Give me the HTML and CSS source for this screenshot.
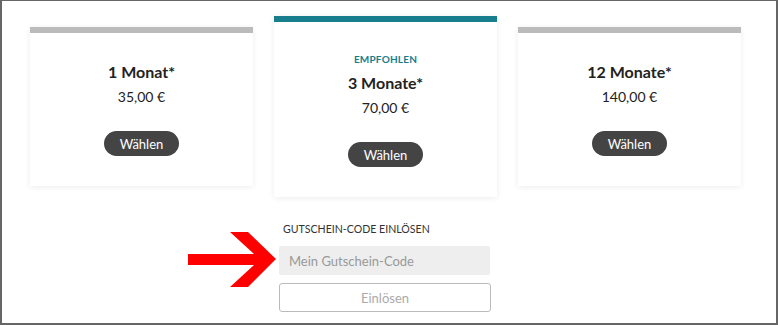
FILE: index.html
```html
<!DOCTYPE html>
<html lang="de">
<head>
    <meta charset="UTF-8">
    <meta name="viewport" content="width=device-width, initial-scale=1.0">
    <title>Abo wählen</title>
    <link rel="stylesheet" href="styles.css">
</head>
<body>
    <div class="frame">
        <div class="plans">
            <div class="plan">
                <h2 class="plan-title">1 Monat*</h2>
                <div class="plan-price">35,00 €</div>
                <button class="choose-button">Wählen</button>
            </div>
            <div class="plan plan-featured">
                <div class="plan-badge">EMPFOHLEN</div>
                <h2 class="plan-title">3 Monate*</h2>
                <div class="plan-price">70,00 €</div>
                <button class="choose-button">Wählen</button>
            </div>
            <div class="plan">
                <h2 class="plan-title">12 Monate*</h2>
                <div class="plan-price">140,00 €</div>
                <button class="choose-button">Wählen</button>
            </div>
        </div>

        <div class="voucher">
            <div class="voucher-label">GUTSCHEIN-CODE EINLÖSEN</div>
            <input type="text" class="voucher-input" placeholder="Mein Gutschein-Code">
            <button class="voucher-button">Einlösen</button>
        </div>

        <svg class="arrow" width="90" height="58" viewBox="188 231 90 58">
            <polygon fill="#f00" points="188,254 254,254 230,232 248,232 276,259 248,287 230,287 254,265 188,265"/>
        </svg>
    </div>
</body>
</html>
```

FILE: styles.css
```css
body {
    margin: 0;
    font-family: Lato, "Open Sans", sans-serif;
    color: #222;
    background-color: #fff;
}
.frame {
    position: relative;
    box-sizing: border-box;
    width: 778px;
    height: 325px;
    border-style: solid;
    border-color: #666;
    border-width: 1px 2px 2px 2px;
    overflow: hidden;
}
.plans {
    display: flex;
    align-items: flex-start;
    gap: 21px;
    padding: 15px 0 0 28px;
}
.plan {
    box-sizing: border-box;
    width: 223px;
    margin-top: 11px;
    padding: 29px 0 30px;
    border-top: 6px solid #bbb;
    background-color: #fff;
    box-shadow: 0 1px 6px rgba(0, 0, 0, 0.08);
    text-align: center;
}
.plan-featured {
    margin-top: 0;
    padding-top: 30px;
    border-top-color: #187d8c;
}
.plan-badge {
    font-size: 10px;
    line-height: 14px;
    font-weight: bold;
    letter-spacing: 0.2px;
    color: #187d8c;
    margin-bottom: 7px;
}
.plan-title {
    margin: 0;
    font-size: 16px;
    line-height: 20px;
    font-weight: bold;
}
.plan-price {
    margin-top: 5px;
    font-size: 14px;
    line-height: 20px;
}
.choose-button {
    margin-top: 24px;
    height: 25px;
    padding: 0 16px;
    border: none;
    border-radius: 13px;
    background-color: #444;
    color: #fff;
    font-family: inherit;
    font-size: 13px;
    cursor: pointer;
}
.voucher {
    display: flex;
    flex-direction: column;
    width: 212px;
    margin: 25px 0 0 277px;
}
.voucher-label {
    padding-left: 4px;
    font-size: 10.6px;
    line-height: 14px;
    color: #333;
    margin-bottom: 10px;
}
.voucher-input {
    box-sizing: border-box;
    width: 211px;
    height: 29px;
    padding: 0 10px;
    border: none;
    border-radius: 2px;
    background-color: #eee;
    font-family: inherit;
    font-size: 13px;
    color: #333;
}
.voucher-input::placeholder {
    color: #999;
}
.voucher-button {
    margin-top: 8px;
    height: 29px;
    border: 1px solid #bbb;
    border-radius: 3px;
    background-color: #fff;
    color: #aaa;
    font-family: inherit;
    font-size: 13px;
}
.arrow {
    position: absolute;
    left: 186px;
    top: 230px;
}
```
